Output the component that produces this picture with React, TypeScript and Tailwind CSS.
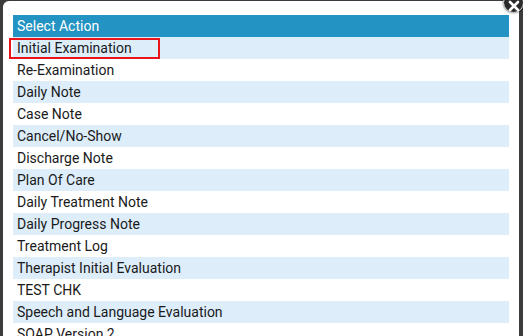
import React from "react";

const items = [
  "Initial Examination",
  "Re-Examination",
  "Daily Note",
  "Case Note",
  "Cancel/No-Show",
  "Discharge Note",
  "Plan Of Care",
  "Daily Treatment Note",
  "Daily Progress Note",
  "Treatment Log",
  "Therapist Initial Evaluation",
  "TEST CHK",
  "Speech and Language Evaluation",
  "SOAP Version 2",
];

export default function App() {
  return (
    <div className="relative w-[523px] h-[336px] overflow-hidden bg-[#3b3b3b] pt-px pl-[3px] pr-[4px]" style={{ fontFamily: "Roboto, 'Liberation Sans', sans-serif" }}>
      <div className="h-[400px] bg-white rounded-tl-[6px] pt-[14px] pl-[10px] pr-[10px]">
        <div className="h-[22px] bg-[#2293c2] text-white text-[14px] leading-[22px] pl-[4px]">Select Action</div>
        {items.map((t, i) => (
          <div
            key={t}
            className={`relative h-[22px] text-[14px] leading-[22px] pl-[4px] text-[#1a1a1a] ${i % 2 === 0 ? "bg-[#ddedfa]" : "bg-white"}`}
          >
            {t}
            {i === 0 && (
              <div className="absolute left-[-4px] top-[1px] w-[151px] h-[21px] border-2 border-[#e8141a]" />
            )}
          </div>
        ))}
      </div>
      <div className="absolute left-[503px] top-[-8px] w-[21px] h-[21px] rounded-full bg-[#2a2a2a] border-[1.5px] border-[#d8d8d8] flex items-center justify-center shadow-[0_0_2px_rgba(0,0,0,0.6)]">
        <svg width="12" height="12" viewBox="0 0 12 12" className="mt-[6px]">
          <path d="M2 2 L10 10 M10 2 L2 10" stroke="white" strokeWidth="2.6" strokeLinecap="round" />
        </svg>
      </div>
    </div>
  );
}
